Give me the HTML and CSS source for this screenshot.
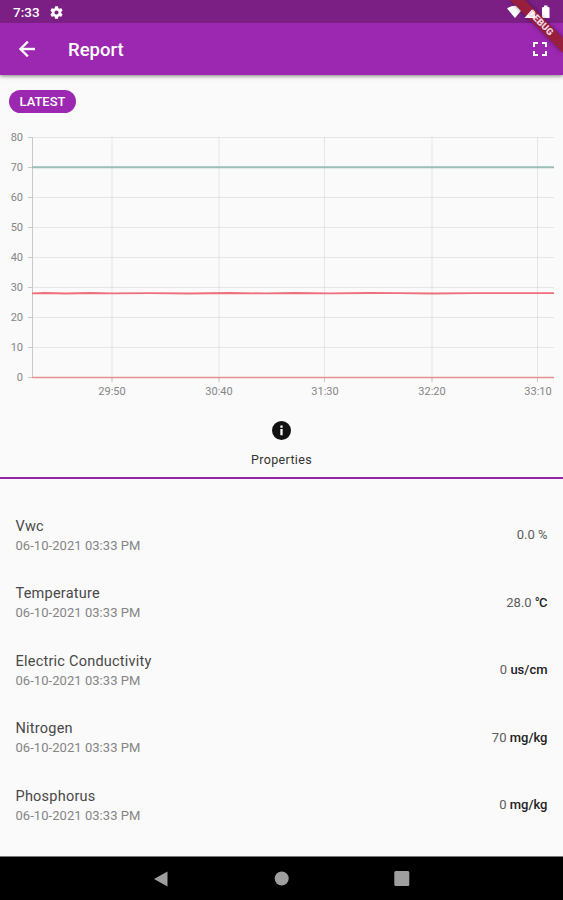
FILE: index.html
```html
<!DOCTYPE html>
<html lang="en">
<head>
<meta charset="utf-8">
<title>Report</title>
<link rel="stylesheet" href="styles.css">
</head>
<body>
<div class="screen">
  <header class="top">
    <div class="status">
      <span class="clock">7:33</span>
      <svg class="gear" viewBox="2 2 20 20"><path d="M19.14 12.94c.04-.3.06-.61.06-.94s-.02-.64-.07-.94l2.03-1.58c.18-.14.23-.41.12-.61l-1.92-3.32c-.12-.22-.37-.29-.59-.22l-2.39.96c-.5-.38-1.03-.7-1.62-.94L14.4 2.81c-.04-.24-.24-.41-.48-.41h-3.84c-.24 0-.43.17-.47.41l-.36 2.54c-.59.24-1.13.57-1.62.94l-2.39-.96c-.22-.08-.47 0-.59.22L2.74 8.87c-.12.21-.08.47.12.61l2.03 1.58c-.05.3-.09.63-.09.94s.02.64.07.94l-2.03 1.58c-.18.14-.23.41-.12.61l1.92 3.32c.12.22.37.29.59.22l2.39-.96c.5.38 1.03.7 1.62.94l.36 2.54c.05.24.24.41.48.41h3.84c.24 0 .44-.17.47-.41l.36-2.54c.59-.24 1.13-.56 1.62-.94l2.39.96c.22.08.47 0 .59-.22l1.92-3.32c.12-.22.07-.47-.12-.61zM12 15.2a3.2 3.2 0 1 1 0-6.4 3.2 3.2 0 0 1 0 6.4z"/></svg>
      <svg class="signals" viewBox="0 0 45 14"><path d="M0 3.500Q8 -2 16 3.500L8 13Z"/><path d="M35 13V3Q35 2 36 2H37V.5H40.500V2H41.500Q42.500 2 42.500 3V13Z"/></svg>
    </div>
    <div class="appbar">
      <svg class="back" viewBox="4 4 16 16"><path d="M20 11H7.830l5.590-5.590L12 4l-8 8 8 8 1.410-1.410L7.830 13H20z"/></svg>
      <h1>Report</h1>
      <svg class="expand" viewBox="0 0 14 14"><path d="M1 5V1H5M9 1H13V5M13 9V13H9M5 13H1V9"/></svg>
    </div>
    <svg class="banner" viewBox="0 0 60 60"><path class="band" d="M7 0H22L60 38V53Z"/><path class="cell" d="M21.500 18 29 9.500 32 13V18Z"/><text transform="translate(38 22.800) rotate(45)" x="0" y="3.200" text-anchor="middle" textLength="31">DEBUG</text></svg>
  </header>
  <main>
    <span class="chip">LATEST</span>
    <svg class="chart" viewBox="0 0 563 280">
      <g class="grid"><path d="M28 12.500H554M28 42.500H554M28 72.500H554M28 102.500H554M28 132.500H554M28 162.500H554M28 192.500H554M28 222.500H554"/><path d="M112 12V257M219 12V257M324.500 12V257M432 12V257M537.500 12V257"/></g>
      <path class="axis" d="M32.500 12V253M28 12.500H33M28 42.500H33M28 72.500H33M28 102.500H33M28 132.500H33M28 162.500H33M28 192.500H33M28 222.500H33M28 252.500H33M112 253V257M219 253V257M324.500 253V257M432 253V257M537.500 253V257"/>
      <path class="green" d="M32 42.300H554"/>
      <path class="red" d="M32 168.300L45 168 66 168.500 90 168 112 168.400 150 168.100 190 168.500 230 168 265 168.400 295 168 330 168.400 370 168 400 168.100 432 168.500 475 168.100H554"/>
      <path class="zero" d="M32 252.500H554"/>
      <g class="ylabels"><text x="23" y="16">80</text><text x="23" y="46">70</text><text x="23" y="76">60</text><text x="23" y="106">50</text><text x="23" y="136">40</text><text x="23" y="166">30</text><text x="23" y="196">20</text><text x="23" y="226">10</text><text x="23" y="256">0</text></g>
      <g class="xlabels"><text x="112" y="270" textLength="27.500">29:50</text><text x="219" y="270" textLength="27.500">30:40</text><text x="325" y="270" textLength="27.500">31:30</text><text x="432" y="270" textLength="27.500">32:20</text><text x="538" y="270" textLength="27.500">33:10</text></g>
    </svg>
    <div class="tab">
      <svg class="info" viewBox="2 2 20 20"><path d="M12 2a10 10 0 1 0 0 20 10 10 0 0 0 0-20zm1.200 15h-2.400v-6.500h2.400zm0-8h-2.400V6.700h2.400z"/></svg>
      <span>Properties</span>
    </div>
    <ul class="list">
      <li><div><p class="name">Vwc</p><p class="date">06-10-2021 03:33 PM</p></div><span class="value">0.0 %</span></li>
      <li><div><p class="name">Temperature</p><p class="date">06-10-2021 03:33 PM</p></div><span class="value">28.0 <b class="degree">°C</b></span></li>
      <li><div><p class="name">Electric Conductivity</p><p class="date">06-10-2021 03:33 PM</p></div><span class="value">0 <b>us/cm</b></span></li>
      <li><div><p class="name">Nitrogen</p><p class="date">06-10-2021 03:33 PM</p></div><span class="value">70 <b>mg/kg</b></span></li>
      <li><div><p class="name">Phosphorus</p><p class="date">06-10-2021 03:33 PM</p></div><span class="value">0 <b>mg/kg</b></span></li>
    </ul>
  </main>
  <nav>
    <svg viewBox="0 0 16 16"><path d="M0 8 13.500 .5V15.500Z"/></svg>
    <svg viewBox="0 0 16 16"><circle cx="7.700" cy="7.500" r="7"/></svg>
    <svg viewBox="0 0 16 16"><rect x=".3" y="0" width="15" height="15" rx="1.500"/></svg>
  </nav>
</div>
</body>
</html>
```
FILE: styles.css
```css
* { box-sizing: border-box; }
body, h1, p, ul { margin: 0; padding: 0; }
body { background: #fafafa; font-family: Roboto, sans-serif; }
svg { display: block; flex: none; }
.screen { width: 563px; height: 900px; display: flex; flex-direction: column; overflow: hidden; }
.top { position: relative; height: 75px; background: #9c27b0; color: #fff; box-shadow: 0 1px 4px rgba(0,0,0,.5); }
.status { height: 23px; background: #7b1f85; display: flex; align-items: center; padding: 1px 11px 0 13px; }
.clock { font-size: 13.5px; font-weight: 500; width: 37px; }
.gear { width: 13px; height: 13px; fill: #fff; }
.signals { width: 45px; height: 14px; margin-left: auto; fill: #fff; }
.appbar { height: 52px; display: flex; align-items: center; padding: 0 16px 0 19px; }
.back { width: 16px; height: 16px; fill: #fff; stroke: #fff; stroke-width: .4; }
h1 { margin-left: 33px; font-size: 18.5px; line-height: 24px; font-weight: 500; margin-top: 1px; }
.expand { width: 14px; height: 14px; margin-left: auto; fill: none; stroke: #fff; stroke-width: 2; }
.banner { position: absolute; top: 0; right: 0; width: 60px; height: 60px; }
.band { fill: #981e3d; filter: drop-shadow(0 0 2px rgba(0,0,0,.4)); }
.cell { fill: #fff; }
.banner text { fill: #f0d9e2; font-size: 9.5px; font-weight: 900; }
main { flex: 1; padding-top: 15px; }
.chip { display: block; width: 67px; height: 23px; margin-left: 9px; border-radius: 12px; background: #9c27b0; color: #fff; font-size: 13px; font-weight: 500; line-height: 23px; text-align: center; }
.chart { width: 563px; height: 280px; margin-top: 12px; }
.grid { stroke: #000; stroke-opacity: .08; fill: none; }
.axis { stroke: #c8c8c8; fill: none; }
.green { stroke: #9dbdb7; stroke-width: 2; }
.red { stroke: #ee6f7c; stroke-width: 1.8; fill: none; }
.zero { stroke: #e88f8f; stroke-width: 1.4; }
.chart text { font-size: 11px; fill: #858585; }
.ylabels { text-anchor: end; }
.xlabels { text-anchor: middle; }
.tab { height: 74px; border-bottom: 2px solid #9226a5; display: flex; flex-direction: column; align-items: center; padding-top: 16px; font-size: 12.5px; color: #333; }
.tab span { margin-top: 12px; line-height: 16px; letter-spacing: .35px; }
.info { width: 19px; height: 19px; fill: #111; }
.list { list-style: none; padding-top: 23px; }
.list li { height: 67.5px; padding: 0 15.5px; display: flex; align-items: center; justify-content: space-between; }
.name { font-size: 14.5px; line-height: 19px; color: #484848; letter-spacing: .23px; }
.date { font-size: 13px; line-height: 19px; color: #858585; letter-spacing: .05px; }
.value { font-size: 13px; line-height: 16px; padding-bottom: 1px; color: #5c5c5c; }
.value b { font-weight: 500; color: #222; }
.value .degree { letter-spacing: -.8px; margin-right: .8px; }
nav { height: 44px; background: #000; border-top: 1px solid #777; display: flex; justify-content: center; align-items: center; gap: 104px; }
nav svg { width: 16px; height: 16px; fill: #9e9e9e; }
```
